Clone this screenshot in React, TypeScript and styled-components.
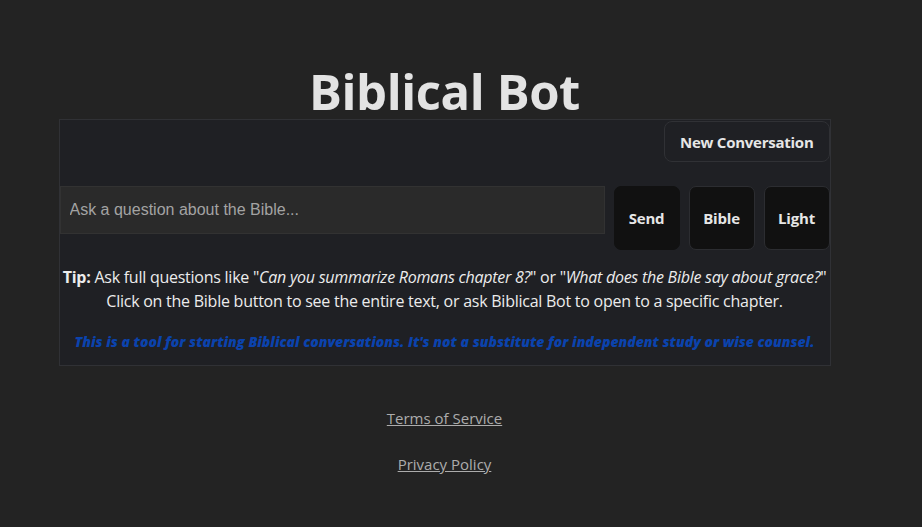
import styled, { createGlobalStyle } from 'styled-components';

const GlobalStyle = createGlobalStyle`
  html, body {
    margin: 0;
    padding: 0;
    background: #232323;
    font-family: "Segoe UI", "Open Sans", sans-serif;
    color: #e6e6e6;
  }
`

const Page = styled.div`
  display: flex;
  flex-direction: column;
  align-items: center;
  padding: 64px 33px 0 0;
`

const Title = styled.h1`
  margin: 0;
  font-size: 49px;
  font-weight: 700;
  line-height: 55px;
  letter-spacing: -0.4px;
  color: #e3e3e3;
`

const Panel = styled.section`
  box-sizing: border-box;
  width: 772px;
  background: #1f2024;
  border: 1px solid #303135;
  padding: 1px 0 14px;
  display: flex;
  flex-direction: column;
`

const TopBar = styled.div`
  display: flex;
  justify-content: flex-end;
`

const GhostButton = styled.button`
  height: 41px;
  padding: 0 15px;
  background: #1f2024;
  border: 1px solid #303135;
  border-radius: 8px;
  color: #e6e6e6;
  font-family: inherit;
  font-size: 15px;
  font-weight: 700;
  letter-spacing: -0.25px;
`

const InputRow = styled.div`
  display: flex;
  align-items: flex-start;
  gap: 9px;
  margin-top: 24px;
`

const QuestionInput = styled.input`
  box-sizing: border-box;
  flex: 0 0 545px;
  height: 48px;
  padding: 0 9px;
  background: #2a2a2a;
  border: 1px solid #323232;
  color: #e6e6e6;
  font-family: "Liberation Sans", Arial, sans-serif;
  font-size: 16px;
  outline: none;
  &::placeholder {
    color: #a3a3a3;
  }
`

const ActionButton = styled.button<{ $plain?: boolean }>`
  box-sizing: border-box;
  width: 66px;
  height: 64px;
  padding: 0;
  background: #111111;
  border: 1px solid ${p => (p.$plain ? '#111111' : '#2c2d31')};
  border-radius: 7px;
  color: #e6e6e6;
  font-family: inherit;
  font-size: 15px;
  font-weight: 700;
  letter-spacing: -0.2px;
`

const Tip = styled.p`
  margin: 15px 0 0;
  text-align: center;
  font-size: 16px;
  line-height: 24px;
  letter-spacing: -0.25px;
  color: #ececec;
  em { font-style: italic; }
`

const Disclaimer = styled.p`
  margin: 19px 0 0;
  text-align: center;
  font-size: 14px;
  font-weight: 800;
  font-style: italic;
  color: #0b43ad;
`

const Footer = styled.nav`
  display: flex;
  flex-direction: column;
  align-items: center;
  gap: 24px;
  margin-top: 41px;
`

const FooterLink = styled.a`
  color: #acacac;
  font-size: 15px;
  line-height: 22px;
  text-decoration: underline;
`

export default function App() {
  return (
    <>
      <GlobalStyle />
      <Page>
        <Title>Biblical Bot</Title>
        <Panel>
          <TopBar>
            <GhostButton>New Conversation</GhostButton>
          </TopBar>
          <InputRow>
            <QuestionInput placeholder="Ask a question about the Bible..." />
            <ActionButton $plain>Send</ActionButton>
            <ActionButton>Bible</ActionButton>
            <ActionButton>Light</ActionButton>
          </InputRow>
          <Tip>
            <strong>Tip:</strong> Ask full questions like "<em>Can you summarize Romans chapter 8?</em>" or "<em>What does the Bible say about grace?</em>"
            <br />
            Click on the Bible button to see the entire text, or ask Biblical Bot to open to a specific chapter.
          </Tip>
          <Disclaimer>
            This is a tool for starting Biblical conversations. It's not a substitute for independent study or wise counsel.
          </Disclaimer>
        </Panel>
        <Footer>
          <FooterLink href="#">Terms of Service</FooterLink>
          <FooterLink href="#">Privacy Policy</FooterLink>
        </Footer>
      </Page>
    </>
  )
}
